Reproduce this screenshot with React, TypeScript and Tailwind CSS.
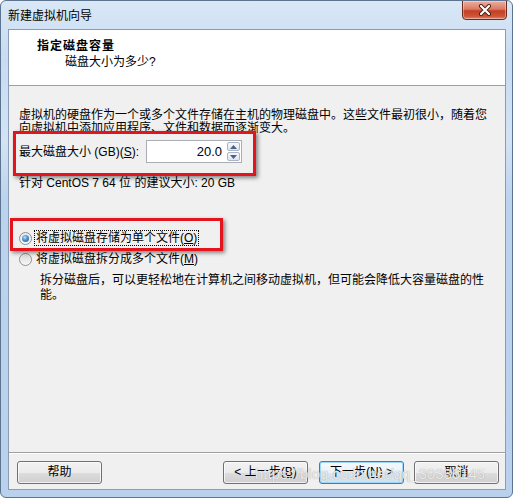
import React from 'react';

const CloseButton = () => (
    <div className="-mt-[1px] mr-[5px] flex h-[20px] w-[45px] items-center justify-center rounded-b-[4px] border border-[#6b2a1c] bg-[linear-gradient(180deg,#eab0a2_0%,#db7a63_45%,#c43f24_55%,#cc5538_85%,#e08b6c_100%)] shadow-[inset_0_0_0_1px_rgba(255,255,255,0.35)]">
        <svg width="14" height="12" viewBox="0 0 14 12">
            <path d="M3 2 L11 10 M11 2 L3 10" stroke="#4a1e14" strokeWidth="4" strokeLinecap="round" />
            <path d="M3 2 L11 10 M11 2 L3 10" stroke="#ffffff" strokeWidth="2.2" strokeLinecap="round" />
        </svg>
    </div>
);

const Radio = ({ checked }: { checked?: boolean }) => (
    <div className="flex h-[13px] w-[13px] shrink-0 items-center justify-center rounded-full border border-[#8e8f8f] bg-[linear-gradient(180deg,#e8e8e8,#f8f8f8)]">
        {checked ? (
            <div className="h-[7px] w-[7px] rounded-full bg-[radial-gradient(circle_at_40%_35%,#bfe1fb_0%,#4a90cf_45%,#1d5a93_100%)]" />
        ) : (
            <div className="h-[9px] w-[9px] rounded-full bg-[linear-gradient(180deg,#dcdcdc,#f4f4f4)]" />
        )}
    </div>
);

const Btn = ({ children, focused }: { children: React.ReactNode; focused?: boolean }) => (
    <button
        className={
            focused
                ? 'h-[23px] w-[85px] rounded-[3px] border border-[#3c7fb1] bg-[linear-gradient(180deg,#f4f9fd_0%,#eaf3fa_50%,#dde9f3_50%,#d0e0ee_100%)] shadow-[inset_0_0_0_1px_#9fd8f7] text-[12px] leading-[21px]'
                : 'h-[23px] w-[85px] rounded-[3px] border border-[#707070] bg-[linear-gradient(180deg,#f2f2f2_0%,#ebebeb_50%,#dddddd_50%,#cfcfcf_100%)] shadow-[inset_0_0_0_1px_rgba(255,255,255,0.7)] text-[12px] leading-[21px]'
        }
    >
        {children}
    </button>
);

const SpinBtn = ({ up }: { up?: boolean }) => (
    <div className="flex flex-1 items-center justify-center rounded-[2px] border border-[#a9b5c6] bg-[linear-gradient(180deg,#f5f8fb,#dde5ef)]">
        <svg width="7" height="4" viewBox="0 0 7 4">
            {up ? <path d="M0 4 L3.5 0 L7 4 Z" fill="#4d6185" /> : <path d="M0 0 L3.5 4 L7 0 Z" fill="#4d6185" />}
        </svg>
    </div>
);

export default function App() {
    return (
        <div className="relative h-[500px] w-[513px] bg-white font-['Liberation_Sans','Noto_Sans_CJK_SC',sans-serif] text-[12px] text-black">
            <div className="flex h-[498px] w-[513px] flex-col overflow-hidden rounded-[6px] border border-[#5d7490] bg-[linear-gradient(180deg,#d9e7f6_0%,#c7dcf2_12%,#d3e3f5_28%,#bcd3ee_40%,#b9d1ec_100%)]">
                {/* Title bar */}
                <div className="flex h-[28px] items-start justify-between">
                    <span className="self-center pl-[7px] pt-[1px] leading-[14px]">新建虚拟机向导</span>
                    <CloseButton />
                </div>

                {/* Client area */}
                <div className="mb-[7px] ml-[7px] mr-[6px] flex flex-1 flex-col border border-[#8a9cb3] bg-[#f0f0f0]">
                    {/* Header */}
                    <div className="h-[56px] border-b border-[#a0a0a0] bg-white pl-[28px] pt-[9px]">
                        <div className="font-bold leading-[14px] tracking-[1px]">指定磁盘容量</div>
                        <div className="mt-[2px] pl-[28px] leading-[14px]">磁盘大小为多少?</div>
                    </div>

                    {/* Body */}
                    <div className="flex-1 pl-[10px] pr-[8px] pt-[23px]">
                        <p className="leading-[13px]">
                            虚拟机的硬盘作为一个或多个文件存储在主机的物理磁盘中。这些文件最初很小，随着您
                            <br />
                            向虚拟机中添加应用程序、文件和数据而逐渐变大。
                        </p>

                        <div className="mt-[5px] flex h-[23px] items-center">
                            <span className="w-[127px] shrink-0">
                                最大磁盘大小 (GB)(<span className="underline">S</span>):
                            </span>
                            <div className="flex h-[23px] w-[96px] border border-[#abadb3] bg-white">
                                <div className="flex-1 pr-[5px] text-right text-[13px] leading-[21px]">20.0</div>
                                <div className="flex w-[14px] flex-col gap-[1px] py-[1px] pr-[1px]">
                                    <SpinBtn up />
                                    <SpinBtn />
                                </div>
                            </div>
                        </div>

                        <p className="mt-[14px] leading-[13px]">针对 CentOS 7 64 位 的建议大小: 20 GB</p>

                        <div className="mt-[40px] flex h-[16px] items-center">
                            <Radio checked />
                            <span className="ml-[2px] border border-dotted border-black px-[1px] leading-[14px]">
                                将虚拟磁盘存储为单个文件(<span className="underline">O</span>)
                            </span>
                        </div>
                        <div className="mt-[5px] flex h-[16px] items-center">
                            <Radio />
                            <span className="ml-[4px] leading-[14px]">
                                将虚拟磁盘拆分成多个文件(<span className="underline">M</span>)
                            </span>
                        </div>
                        <p className="ml-[21px] mt-[6px] leading-[15px]">
                            拆分磁盘后，可以更轻松地在计算机之间移动虚拟机，但可能会降低大容量磁盘的性
                            <br />
                            能。
                        </p>
                    </div>

                    {/* Footer */}
                    <div className="flex h-[37px] items-start border-t border-[#a0a0a0] pl-[8px] pr-[6px] pt-[8px] shadow-[inset_0_1px_0_#ffffff]">
                        <Btn>帮助</Btn>
                        <div className="flex-1" />
                        <Btn>
                            &lt; 上一步(<span className="underline">B</span>)
                        </Btn>
                        <div className="ml-[11px]">
                            <Btn focused>
                                下一步(<span className="underline">N</span>) &gt;
                            </Btn>
                        </div>
                        <div className="ml-[10px]">
                            <Btn>取消</Btn>
                        </div>
                    </div>
                </div>
            </div>

            {/* Annotations */}
            <div className="absolute left-[13px] top-[131px] h-[45px] w-[243px] border-[3px] border-[#e3141b] shadow-[2px_2px_4px_rgba(0,0,0,0.45)]" />
            <div className="absolute left-[10px] top-[218px] h-[33px] w-[213px] border-[3px] border-[#e3141b] shadow-[2px_2px_4px_rgba(0,0,0,0.45)]" />

            {/* Watermark */}
            <div className="absolute left-[255px] top-[463px] text-[15px] text-white/80 [text-shadow:0_0_1px_#8a8a8a]">
                https://blog.csdn.net/qq_30386145
            </div>
        </div>
    );
}
